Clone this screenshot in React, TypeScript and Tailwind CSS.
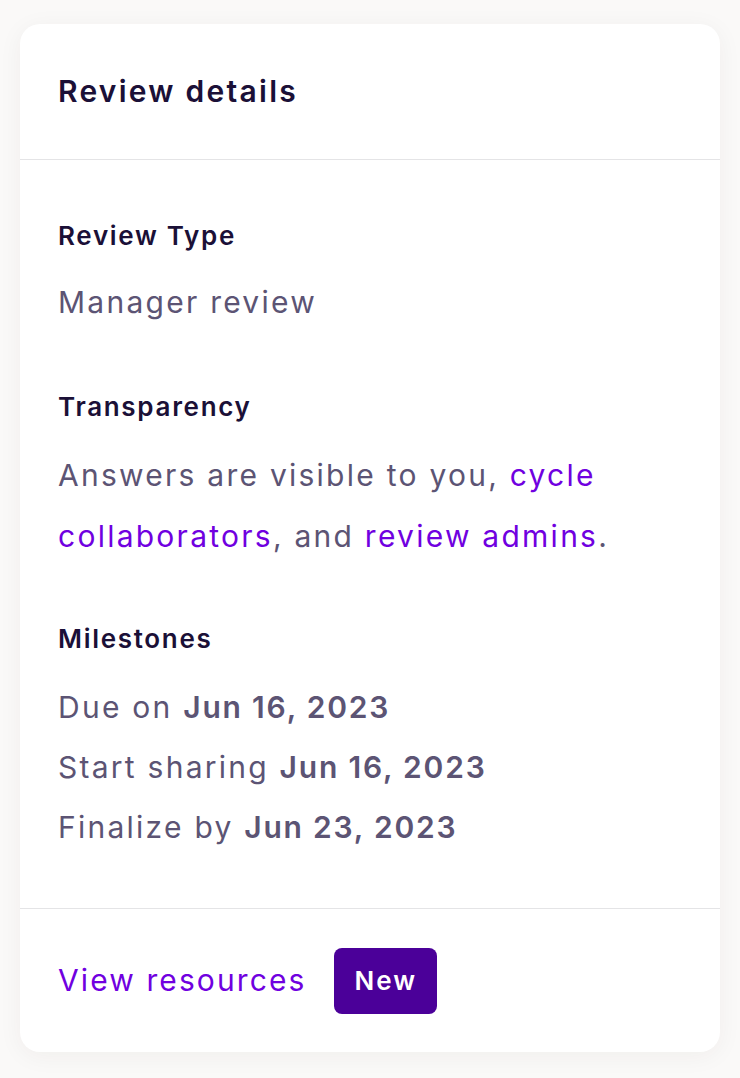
import React from "react";

const Label = ({ children }: { children: React.ReactNode }) => (
  <div className="text-[26px] leading-[36px] font-semibold tracking-[0.065em] text-[#1b1037]">{children}</div>
);

export default function App() {
  return (
    <div
      className="min-h-[1078px] bg-[#faf9f8] pt-6 px-5"
      style={{ fontFamily: "Inter, 'Noto Sans', sans-serif" }}
    >
      <div className="bg-white rounded-[20px] shadow-[0_4px_24px_rgba(60,40,20,0.05)] overflow-hidden">
        <div className="h-[136px] flex items-center px-[38px] border-b border-[#e4e4e6]">
          <h2 className="text-[30px] font-semibold tracking-[0.075em] text-[#1b1037]">Review details</h2>
        </div>

        <div className="px-[38px] pt-[58px] pb-[51px] border-b border-[#e4e4e6] text-[30px] tracking-[0.075em]">
          <Label>Review Type</Label>
          <div className="mt-[18px] leading-[60px] text-[#5c5474]">Manager review</div>

          <div className="mt-[57px]">
            <Label>Transparency</Label>
          </div>
          <p className="mt-[20px] leading-[61px] text-[#5c5474]">
            Answers are visible to you, <span className="text-[#7000e0]">cycle collaborators</span>, and{" "}
            <span className="text-[#7000e0]">review admins</span>.
          </p>

          <div className="mt-[54px]">
            <Label>Milestones</Label>
          </div>
          <div className="mt-[20px] leading-[60px] text-[#5c5474]">
            <div>
              Due on <span className="font-semibold tracking-[0.06em]">Jun 16, 2023</span>
            </div>
            <div>
              Start sharing <span className="font-semibold tracking-[0.06em]">Jun 16, 2023</span>
            </div>
            <div>
              Finalize by <span className="font-semibold tracking-[0.06em]">Jun 23, 2023</span>
            </div>
          </div>
        </div>

        <div className="h-[143px] flex items-center gap-[28px] px-[38px]">
          <a className="text-[30px] tracking-[0.07em] text-[#7000e0]">View resources</a>
          <span className="h-[66px] px-[20px] flex items-center rounded-[8px] bg-[#4b0099] text-white text-[26px] font-semibold tracking-[0.08em]">
            New
          </span>
        </div>
      </div>
    </div>
  );
}
